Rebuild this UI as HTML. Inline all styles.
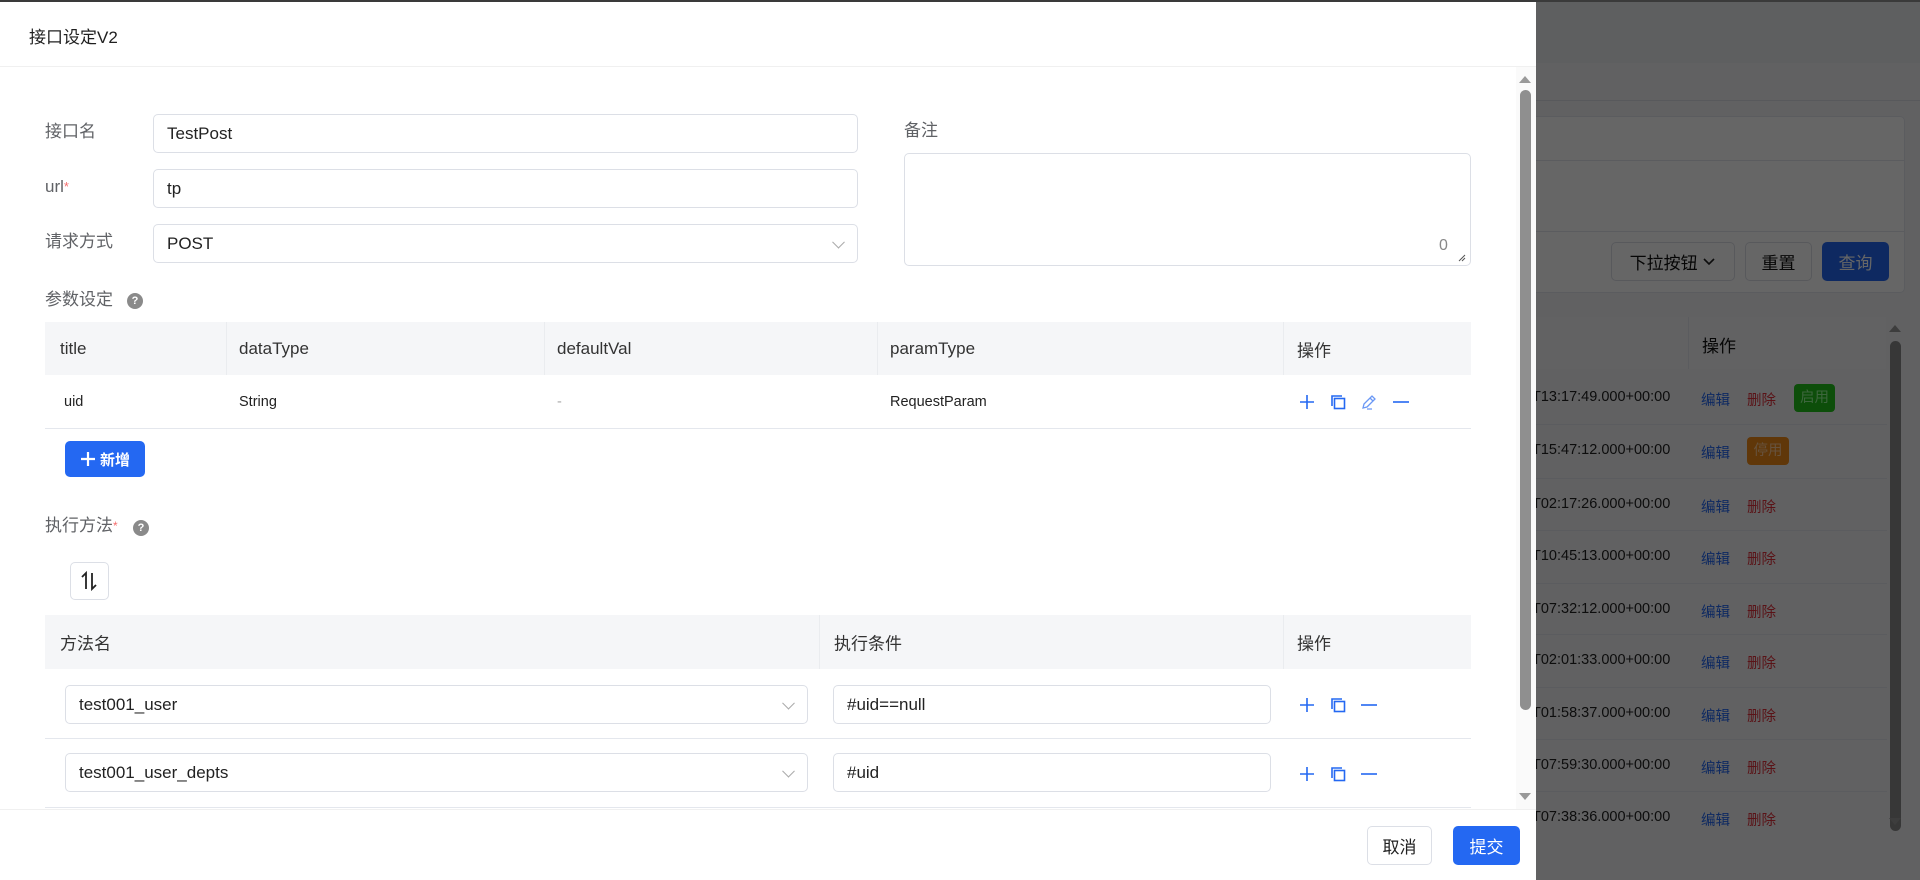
<!DOCTYPE html>
<html><head><meta charset="utf-8">
<style>
*{box-sizing:border-box;margin:0;padding:0}
body{width:1920px;height:880px;overflow:hidden;position:relative;background:#fff;font-family:"Liberation Sans","Noto Sans CJK SC",sans-serif;color:#222}
.a{position:absolute}
.bg{left:0;top:0;width:1920px;height:880px;background:#f2f3f5}
.mask{left:0;top:0;width:1920px;height:880px;background:rgba(0,0,0,.6);z-index:10}
.drawer{left:0;top:0;width:1536px;height:880px;background:#fff;z-index:20}
.lbl{font-size:17px;color:#606266;line-height:20px}
.inp{border:1px solid #dcdfe6;border-radius:5px;background:#fff;font-size:17px;color:#222;padding-left:13px;display:flex;align-items:center}
.chev{position:absolute;right:14px;top:50%;width:9px;height:9px;border-right:1.2px solid #aaa;border-bottom:1.2px solid #aaa;transform:translateY(-70%) rotate(45deg)}
.th{background:#f5f6f8;height:53px;font-size:17px;color:#333}
.th span,.tr span{position:absolute;top:50%;transform:translateY(-50%)}
.q{display:inline-block;width:16px;height:16px;border-radius:50%;background:#8a8a8a;color:#fff;font-size:11px;font-weight:bold;text-align:center;line-height:16px}
.ic{position:absolute;width:18px;height:18px}
.bt{position:absolute;border-radius:5px;font-size:17px;display:flex;align-items:center;justify-content:center}
.rw{position:relative;height:53px;border-bottom:1px solid #e4e7ed}
.rw span{position:absolute;top:17px}
</style></head><body>
<div class="a bg"></div>
<div class="a" style="left:0;top:0;width:1920px;height:63px;background:#eceef1"></div>
<div class="a" style="left:1536px;top:100px;width:384px;height:1px;background:#dcdfe6"></div>
<div class="a" style="left:1300px;top:116px;width:605px;height:177px;background:#fff;border:1px solid #e4e7ed;border-radius:5px"></div>
<div class="a" style="left:1300px;top:160px;width:605px;height:1px;background:#e4e7ed"></div>
<div class="a" style="left:1300px;top:231px;width:605px;height:1px;background:#e4e7ed"></div>
<div class="bt" style="left:1611px;top:242px;width:124px;height:39px;border:1px solid #dcdfe6;background:#fff;color:#111">下拉按钮&nbsp;<svg width="14" height="10" viewBox="0 0 14 10"><path d="M2 2l5 5 5-5" stroke="#222" stroke-width="1.6" fill="none"/></svg></div>
<div class="bt" style="left:1745px;top:242px;width:67px;height:39px;border:1px solid #dcdfe6;background:#fff;color:#111">重置</div>
<div class="bt" style="left:1822px;top:242px;width:67px;height:39px;background:#2468f2;color:#fff">查询</div>
<div class="a" style="left:1300px;top:317px;width:586px;height:52px;background:#f5f6f8"></div>
<div class="a" style="left:1688px;top:317px;width:1px;height:52px;background:#e4e7ed"></div>
<div class="a" style="left:1702px;top:332px;font-size:17px;color:#111">操作</div>
<div class="a" style="left:1890px;top:341px;width:11px;height:490px;border-radius:6px;background:#8a8a8a"></div>
<div class="a" style="left:1889px;top:325px;width:0;height:0;border-left:6px solid transparent;border-right:6px solid transparent;border-bottom:7px solid #9a9a9a"></div>
<div class="a" style="left:1889px;top:818px;width:0;height:0;border-left:6px solid transparent;border-right:6px solid transparent;border-top:7px solid #9a9a9a"></div>
<div class="a" style="left:1532px;top:370px;width:355px;font-size:14.5px;color:#222">
<div class="rw" style="height:55px"><span style="top:19px">T13:17:49.000+00:00</span><span style="left:169px;top:19px;color:#2468f2">编辑</span><span style="left:215px;top:19px;color:#e0303a">删除</span><span style="left:262px;top:14px;width:41px;height:28px;background:#22c21a;border-radius:4px;text-align:center;line-height:28px;color:#9f9">启用</span></div>
<div class="rw" style="height:54px"><span>T15:47:12.000+00:00</span><span style="left:169px;color:#2468f2">编辑</span><span style="left:215px;top:12px;width:42px;height:28px;background:#f08a18;border-radius:4px;text-align:center;line-height:28px;color:#fc9">停用</span></div>
<div class="rw" style="height:52px"><span>T02:17:26.000+00:00</span><span style="left:169px;color:#2468f2">编辑</span><span style="left:215px;color:#e0303a">删除</span></div>
<div class="rw"><span>T10:45:13.000+00:00</span><span style="left:169px;color:#2468f2">编辑</span><span style="left:215px;color:#e0303a">删除</span></div>
<div class="rw" style="height:51px"><span>T07:32:12.000+00:00</span><span style="left:169px;color:#2468f2">编辑</span><span style="left:215px;color:#e0303a">删除</span></div>
<div class="rw"><span>T02:01:33.000+00:00</span><span style="left:169px;color:#2468f2">编辑</span><span style="left:215px;color:#e0303a">删除</span></div>
<div class="rw" style="height:52px"><span>T01:58:37.000+00:00</span><span style="left:169px;color:#2468f2">编辑</span><span style="left:215px;color:#e0303a">删除</span></div>
<div class="rw" style="height:52px"><span>T07:59:30.000+00:00</span><span style="left:169px;color:#2468f2">编辑</span><span style="left:215px;color:#e0303a">删除</span></div>
<div class="rw" style="border:none"><span>T07:38:36.000+00:00</span><span style="left:169px;color:#2468f2">编辑</span><span style="left:215px;color:#e0303a">删除</span></div>
</div>
<div class="a mask"></div>
<div class="a" style="left:0;top:0;width:1920px;height:2px;background:#3a3a3a;z-index:30"></div>

<div class="a drawer">
<div class="a" style="left:29px;top:23px;font-size:17px;color:#1f1f1f">接口设定V2</div>
<div class="a" style="left:0;top:66px;width:1536px;height:1px;background:#f0f0f0"></div>

<div class="a" style="left:1516px;top:67px;width:20px;height:742px;background:#fafafa"></div>
<div class="a" style="left:1520px;top:90px;width:11px;height:620px;border-radius:6px;background:#8f8f8f"></div>
<div class="a" style="left:1519px;top:76px;width:0;height:0;border-left:6px solid transparent;border-right:6px solid transparent;border-bottom:7px solid #999"></div>
<div class="a" style="left:1519px;top:793px;width:0;height:0;border-left:6px solid transparent;border-right:6px solid transparent;border-top:7px solid #999"></div>

<div class="a lbl" style="left:45px;top:122px">接口名</div>
<div class="a inp" style="left:153px;top:114px;width:705px;height:39px">TestPost</div>
<div class="a lbl" style="left:45px;top:177px">url<span style="color:#f56c6c;font-size:13px;vertical-align:top">*</span></div>
<div class="a inp" style="left:153px;top:169px;width:705px;height:39px">tp</div>
<div class="a lbl" style="left:45px;top:232px">请求方式</div>
<div class="a inp" style="left:153px;top:224px;width:705px;height:39px">POST<i class="chev"></i></div>
<div class="a lbl" style="left:904px;top:121px">备注</div>
<div class="a" style="left:904px;top:153px;width:567px;height:113px;border:1px solid #dcdfe6;border-radius:5px"></div>
<div class="a" style="left:1439px;top:237px;font-size:16px;color:#888">0</div>
<svg class="a" style="left:1458px;top:254px" width="8" height="8"><path d="M1 7L7 1M4 7L7 4" stroke="#555" stroke-width="1"/></svg>

<div class="a lbl" style="left:45px;top:290px">参数设定</div>
<div class="a" style="left:127px;top:291px"><span class="q">?</span></div>

<div class="a th" style="left:45px;top:322px;width:1426px">
<span style="left:15px">title</span>
<span style="left:194px">dataType</span>
<span style="left:512px">defaultVal</span>
<span style="left:845px">paramType</span>
<span style="left:1252px">操作</span>
</div>
<div class="a" style="left:226px;top:322px;width:1px;height:53px;background:#eaecef"></div>
<div class="a" style="left:544px;top:322px;width:1px;height:53px;background:#eaecef"></div>
<div class="a" style="left:877px;top:322px;width:1px;height:53px;background:#eaecef"></div>
<div class="a" style="left:1283px;top:322px;width:1px;height:53px;background:#eaecef"></div>
<div class="a tr" style="left:45px;top:375px;width:1426px;height:54px;border-bottom:1px solid #e4e7ed;font-size:14.5px;color:#222">
<span style="left:19px">uid</span>
<span style="left:194px">String</span>
<span style="left:512px;color:#aaa">-</span>
<span style="left:845px">RequestParam</span>
</div>
<svg class="ic" style="left:1298px;top:393px" viewBox="0 0 18 18"><path d="M9 2v14M2 9h14" stroke="#2468f2" stroke-width="1.6"/></svg>
<svg class="ic" style="left:1329px;top:393px" viewBox="0 0 18 18"><path d="M3 13V3h10" stroke="#2468f2" stroke-width="1.6" fill="none"/><rect x="5.5" y="5.5" width="10" height="10" stroke="#2468f2" stroke-width="1.6" fill="none"/></svg>
<svg class="ic" style="left:1360px;top:393px" viewBox="0 0 18 18"><path d="M3 15l1-4 8-8 3 3-8 8zM10 5l3 3M7 16h5" stroke="#6a98f5" stroke-width="1.3" fill="none"/></svg>
<svg class="ic" style="left:1392px;top:393px" viewBox="0 0 18 18"><path d="M1 9h16" stroke="#2468f2" stroke-width="1.6"/></svg>

<div class="bt" style="left:65px;top:441px;width:80px;height:36px;background:#2468f2;color:#fff;font-size:15px;font-weight:bold"><svg width="16" height="16" viewBox="0 0 16 16" style="margin-right:4px"><path d="M8 1v14M1 8h14" stroke="#fff" stroke-width="2.2"/></svg>新增</div>

<div class="a lbl" style="left:45px;top:516px">执行方法<span style="color:#f56c6c;font-size:12px;vertical-align:top">*</span></div>
<div class="a" style="left:133px;top:518px"><span class="q">?</span></div>

<div class="a" style="left:70px;top:562px;width:39px;height:38px;border:1px solid #dcdfe6;border-radius:5px"></div>
<svg class="a" style="left:80px;top:570px" width="18" height="22" viewBox="0 0 18 22"><path d="M6 19V3L2 7M12 3v16l4-4" stroke="#222" stroke-width="1.8" fill="none"/></svg>

<div class="a th" style="left:45px;top:615px;width:1426px;height:54px">
<span style="left:15px">方法名</span>
<span style="left:789px">执行条件</span>
<span style="left:1252px">操作</span>
</div>
<div class="a" style="left:819px;top:615px;width:1px;height:54px;background:#eaecef"></div>
<div class="a" style="left:1283px;top:615px;width:1px;height:54px;background:#eaecef"></div>
<div class="a" style="left:45px;top:738px;width:1426px;height:1px;background:#e4e7ed"></div>
<div class="a" style="left:45px;top:807px;width:1426px;height:1px;background:#e4e7ed"></div>
<div class="a inp" style="left:65px;top:685px;width:743px;height:39px">test001_user<i class="chev"></i></div>
<div class="a inp" style="left:833px;top:685px;width:438px;height:39px">#uid==null</div>
<div class="a inp" style="left:65px;top:753px;width:743px;height:39px">test001_user_depts<i class="chev"></i></div>
<div class="a inp" style="left:833px;top:753px;width:438px;height:39px">#uid</div>
<svg class="ic" style="left:1298px;top:696px" viewBox="0 0 18 18"><path d="M9 2v14M2 9h14" stroke="#2468f2" stroke-width="1.6"/></svg>
<svg class="ic" style="left:1329px;top:696px" viewBox="0 0 18 18"><path d="M3 13V3h10" stroke="#2468f2" stroke-width="1.6" fill="none"/><rect x="5.5" y="5.5" width="10" height="10" stroke="#2468f2" stroke-width="1.6" fill="none"/></svg>
<svg class="ic" style="left:1360px;top:696px" viewBox="0 0 18 18"><path d="M1 9h16" stroke="#2468f2" stroke-width="1.6"/></svg>
<svg class="ic" style="left:1298px;top:765px" viewBox="0 0 18 18"><path d="M9 2v14M2 9h14" stroke="#2468f2" stroke-width="1.6"/></svg>
<svg class="ic" style="left:1329px;top:765px" viewBox="0 0 18 18"><path d="M3 13V3h10" stroke="#2468f2" stroke-width="1.6" fill="none"/><rect x="5.5" y="5.5" width="10" height="10" stroke="#2468f2" stroke-width="1.6" fill="none"/></svg>
<svg class="ic" style="left:1360px;top:765px" viewBox="0 0 18 18"><path d="M1 9h16" stroke="#2468f2" stroke-width="1.6"/></svg>

<div class="a" style="left:0;top:809px;width:1536px;height:71px;background:#fff;border-top:1px solid #f0f0f0"></div>
<div class="bt" style="left:1367px;top:826px;width:65px;height:39px;border:1px solid #dcdfe6;color:#222">取消</div>
<div class="bt" style="left:1453px;top:826px;width:67px;height:39px;background:#2468f2;color:#fff">提交</div>
</div>
</body></html>
